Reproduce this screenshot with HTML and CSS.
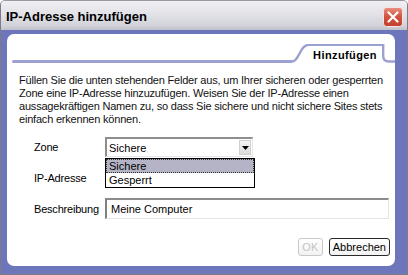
FILE: index.html
```html
<!DOCTYPE html>
<html lang="de">
<head>
<meta charset="utf-8">
<title>IP-Adresse hinzufügen</title>
<link rel="stylesheet" href="styles.css">
</head>
<body>
<div class="window">
  <div class="titlebar">
    <span class="title">IP-Adresse hinzufügen</span>
    <span class="close" aria-label="Schließen">
      <svg width="20" height="20" viewBox="0 0 20 20">
        <defs>
          <linearGradient id="cg" x1="0" y1="0" x2="0" y2="1">
            <stop offset="0" stop-color="#e8917f"/>
            <stop offset="0.5" stop-color="#d2513f"/>
            <stop offset="1" stop-color="#c2402f"/>
          </linearGradient>
        </defs>
        <rect x="0.5" y="0.5" width="19" height="19" rx="3" fill="url(#cg)" stroke="#f3e6e4"/>
        <path d="M5.5 5.5 L14.5 14.5 M14.5 5.5 L5.5 14.5" stroke="#ffffff" stroke-width="2.2" stroke-linecap="round"/>
      </svg>
    </span>
  </div>
  <div class="frame">
    <div class="panel">
      <div class="tabstrip">
        <div class="tab-line"></div>
        <svg class="tab-left" width="16" height="19" viewBox="0 0 16 19"><path d="M0 17.5 C7 17.5 8 1.1 16 1.1" fill="none" stroke="#9da1cf" stroke-width="2.4"/></svg>
        <div class="tab">Hinzufügen</div>
        <svg class="tab-right" width="13" height="19" viewBox="0 0 13 19"><path d="M1.2 0 V12 Q1.2 17.5 7 17.5 H13" fill="none" stroke="#9da1cf" stroke-width="2.4"/></svg>
      </div>
      <p class="intro">Füllen Sie die unten stehenden Felder aus, um Ihrer sicheren oder gesperrten<br>Zone eine IP-Adresse hinzuzufügen. Weisen Sie der IP-Adresse einen<br>aussagekräftigen Namen zu, so dass Sie sichere und nicht sichere Sites stets<br>einfach erkennen können.</p>
      <div class="form">
        <span class="label">Zone</span>
        <div class="select-wrap">
          <div class="select">
            <span class="select-value">Sichere</span>
            <span class="select-btn"><svg width="7" height="4" viewBox="0 0 7 4"><path d="M0 0 H7 L3.5 4 Z" fill="#000"/></svg></span>
          </div>
          <ul class="dropdown">
            <li class="option selected">Sichere</li>
            <li class="option">Gesperrt</li>
          </ul>
        </div>
        <span class="label">IP-Adresse</span>
        <div class="input ip"></div>
        <span class="label">Beschreibung</span>
        <div class="input desc">Meine Computer</div>
      </div>
      <div class="buttons">
        <button class="btn" disabled>OK</button>
        <button class="btn">Abbrechen</button>
      </div>
    </div>
  </div>
</div>
</body>
</html>
```
FILE: styles.css
```css
* { box-sizing: border-box; }
html, body { margin: 0; padding: 0; }
body {
  width: 408px;
  height: 275px;
  overflow: hidden;
  font-family: "Liberation Sans", Arial, sans-serif;
  font-size: 11px;
  color: #000;
  background: #fff;
}
.window {
  width: 408px;
  height: 275px;
  display: flex;
  flex-direction: column;
  border: 1px solid #7c7c84;
  border-top-color: #9a9aa2;
  border-radius: 5px 5px 0 0;
  overflow: hidden;
}
.titlebar {
  height: 29px;
  flex: none;
  display: flex;
  align-items: center;
  justify-content: space-between;
  padding: 2px 4px 0 5px;
  background: linear-gradient(to bottom, #f0f0f2 0%, #e2e2e8 45%, #d2d2da 85%, #c0c0ca 100%);
}
.title {
  font-weight: bold;
  font-size: 13px;
  line-height: 16px;
  color: #000;
}
.close { display: flex; width: 20px; height: 20px; }
.frame {
  flex: 1;
  display: flex;
  padding: 4px 12px 8px 6px;
  background: #6d75bb;
}
.panel {
  flex: 1;
  display: flex;
  flex-direction: column;
  background: #fff;
  border-radius: 7px;
}
.tabstrip {
  display: flex;
  align-items: flex-start;
  height: 19px;
  margin: 10px 0 0 5px;
}
.tab-line {
  flex: 1;
  height: 3px;
  margin-top: 16px;
  background: #9da1cf;
  border-radius: 2px 0 0 2px;
}
.tab-left, .tab-right { flex: none; display: block; }
.tab {
  height: 19px;
  padding: 3px 5px 0 5px;
  border-top: 2px solid #9da1cf;
  font-weight: bold;
  font-size: 11px;
  line-height: 13px;
  letter-spacing: 0.4px;
}
.intro {
  margin: 11px 0 0 12px;
  line-height: 13px;
  letter-spacing: -0.2px;
  color: #111;
}
.form {
  display: grid;
  grid-template-columns: 71px 284px;
  grid-template-rows: 20px 21px 21px;
  row-gap: 10px;
  align-items: center;
  margin: 11px 0 0 27px;
}
.label { letter-spacing: -0.2px; }
.select-wrap {
  position: relative;
  width: 148px;
  height: 20px;
}
.select {
  height: 20px;
  display: flex;
  align-items: center;
  justify-content: space-between;
  border: 1px solid #9c9c9c;
  border-top: 2px solid #8e8e8e;
  border-left: 2px solid #8e8e8e;
  border-right-color: #e6e6e6;
  border-bottom-color: #e6e6e6;
  padding: 0 1px 0 2px;
}
.select-btn {
  width: 12px;
  height: 15px;
  display: flex;
  align-items: center;
  justify-content: center;
  background: linear-gradient(to bottom, #f4f4f4, #dcdcdc);
  border: 1px solid #d0d0d0;
}
.dropdown {
  position: absolute;
  left: 0;
  top: 21px;
  width: 150px;
  margin: 0;
  padding: 0;
  list-style: none;
  border: 1px solid #000;
  background: #fff;
}
.option {
  height: 14px;
  line-height: 13px;
  padding-left: 2px;
  border: 1px solid transparent;
}
.option.selected {
  background: #b4b4c6;
  border: 1px dotted #333;
}
.input {
  height: 21px;
  border: 1px solid #e4e4e4;
  border-top: 2px solid #8c8c8c;
  border-left: 2px solid #808080;
  padding: 0 4px;
  line-height: 18px;
  background: #fff;
}
.input.ip { width: 148px; }
.input.desc { width: 284px; }
.buttons {
  display: flex;
  justify-content: flex-end;
  gap: 6px;
  margin: 19px 5px 0 0;
}
.btn {
  height: 18px;
  padding: 0 3px;
  font-family: "Liberation Sans", Arial, sans-serif;
  font-size: 11px;
  line-height: 14px;
  color: #000;
  background: linear-gradient(to bottom, #ffffff, #f2f2f2);
  border: 1px solid #2a2a2a;
  border-radius: 3px;
}
.btn:disabled {
  width: 25px;
  color: #c4c4c4;
  border-color: #c8c8c8;
}
```
